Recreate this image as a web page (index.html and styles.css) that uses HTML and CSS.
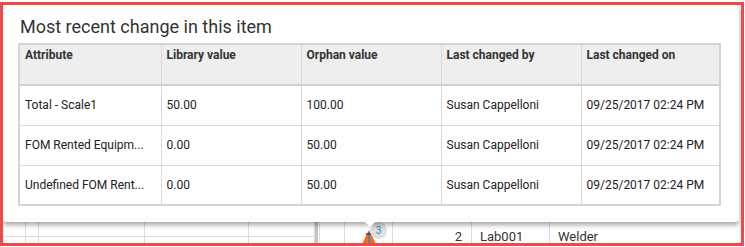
FILE: index.html
```html
<!DOCTYPE html>
<html>
<head>
<meta charset="utf-8">
<link rel="stylesheet" href="styles.css">
</head>
<body>
<div class="frame">
  <div class="page">
    <div class="grid-row">
      <div class="left-grid">
        <div class="lc w23"></div><div class="lc w13"></div><div class="lc w106"></div><div class="lc w104"></div><div class="lc w66"></div>
        <div class="lc w23 b"></div><div class="lc w13 b"></div><div class="lc w106 b"></div><div class="lc w104 b"></div><div class="lc w66 b"></div>
      </div>
      <div class="sep"></div>
      <div class="right-grid">
        <div class="rc w2"></div>
        <div class="rc w25"></div>
        <div class="rc w48 flagcell">
          <span class="flag"><svg width="16" height="16" viewBox="0 0 16 16"><polygon points="8,0 16,16 0,16" fill="#f26a1b"/><line x1="8" y1="2" x2="8" y2="16" stroke="#1e8ad6" stroke-width="1.4"/><line x1="5" y1="4" x2="11" y2="4" stroke="#222" stroke-width="1.2"/></svg></span>
          <span class="badge">3</span>
        </div>
        <div class="rc w79 num">2</div>
        <div class="rc w78 txt">Lab001</div>
        <div class="rc grow txt">Welder</div>
      </div>
    </div>
  </div>
  <div class="popup">
    <h1 class="title">Most recent change in this item</h1>
    <table class="changes">
      <colgroup><col class="c1"><col class="c2"><col class="c3"><col class="c4"><col class="c5"></colgroup>
      <thead>
        <tr><th>Attribute</th><th>Library value</th><th>Orphan value</th><th>Last changed by</th><th>Last changed on</th></tr>
      </thead>
      <tbody>
        <tr><td>Total - Scale1</td><td>50.00</td><td>100.00</td><td>Susan Cappelloni</td><td>09/25/2017 02:24 PM</td></tr>
        <tr><td>FOM Rented Equipm...</td><td>0.00</td><td>50.00</td><td>Susan Cappelloni</td><td>09/25/2017 02:24 PM</td></tr>
        <tr><td>Undefined FOM Rent...</td><td>0.00</td><td>50.00</td><td>Susan Cappelloni</td><td>09/25/2017 02:24 PM</td></tr>
      </tbody>
    </table>
    <span class="caret"></span>
  </div>
</div>
</body>
</html>
```
FILE: styles.css
```css
html, body { margin: 0; padding: 0; background: #fff; }
body { font-family: Roboto, "Liberation Sans", sans-serif; color: #333; }

.frame {
  position: relative;
  box-sizing: border-box;
  width: 744px;
  height: 244px;
  margin-top: 2px;
  border: 3px solid #f24848;
  overflow: hidden;
}

.page {
  height: 100%;
  display: flex;
  flex-direction: column;
  justify-content: flex-end;
}

.grid-row {
  display: flex;
  height: 21px;
}

.left-grid {
  display: grid;
  grid-template-columns: 23px 13px 106px 104px 66px;
  grid-template-rows: 15px 6px;
}
.lc { border-right: 1px solid #dcdcdc; border-bottom: 1px solid #dcdcdc; box-sizing: border-box; }
.lc.b { border-bottom: none; }

.sep { width: 3px; background: #c4c4c4; }

.right-grid { display: flex; flex: 1; }
.rc { box-sizing: border-box; border-right: 1px solid #dcdcdc; font-size: 13px; color: #333; line-height: 21px; padding-top: 4px; }
.w2 { width: 2px; }
.w25 { width: 25px; }
.w48 { width: 48px; }
.w79 { width: 79px; }
.w78 { width: 78px; }
.grow { flex: 1; border-right: none; }
.num { text-align: right; padding-right: 9px; }
.txt { padding-left: 8px; }

.flagcell { position: relative; }
.flag { position: absolute; left: 16px; top: 8px; line-height: 0; }
.badge {
  position: absolute; left: 25px; top: 0px;
  width: 17px; height: 17px; border-radius: 50%;
  background: #dedede; color: #2a8ad0;
  font-size: 10px; line-height: 17px; text-align: center;
}

.popup {
  position: absolute;
  left: 0; top: 0;
  box-sizing: border-box;
  width: 736px;
  height: 217px;
  background: #fff;
  padding: 11px 20px 0 15px;
  box-shadow: 0 3px 5px rgba(0,0,0,0.35);
  border-radius: 0 0 3px 3px;
}

.title {
  margin: 0 0 5px 2px;
  font-size: 18px;
  font-weight: 400;
  line-height: 22px;
  color: #333;
}

.changes {
  border-collapse: collapse;
  table-layout: fixed;
  width: 701px;
  border: 2px solid #d4d4d4;
  font-size: 12px;
}
.c1 { width: 142px; }
.c2, .c3, .c4 { width: 140px; }
.c5 { width: 139px; }

.changes th {
  box-sizing: border-box;
  background: #edeeed;
  height: 41px;
  vertical-align: top;
  text-align: left;
  font-weight: 700;
  padding: 3px 5px 0 5px;
  border-right: 1px solid #d9d9d9;
  border-bottom: 2px solid #d0d0d0;
  color: #333;
}
.changes td {
  height: 40px;
  box-sizing: border-box;
  padding: 0 5px;
  border-right: 1px solid #d9d9d9;
  border-bottom: 1px solid #d9d9d9;
  white-space: nowrap;
  overflow: hidden;
  color: #222;
}

.caret {
  position: absolute;
  left: 361px;
  bottom: -5px;
  width: 0; height: 0;
  border-left: 6px solid transparent;
  border-right: 6px solid transparent;
  border-top: 6px solid #fff;
}
```
